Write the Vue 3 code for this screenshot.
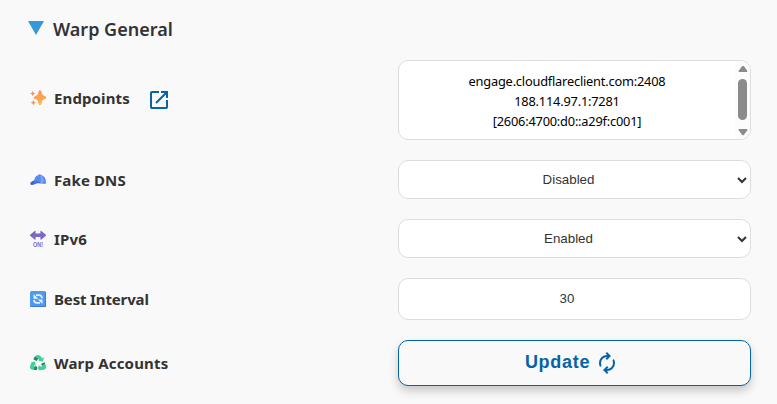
<script setup>
import { ref } from 'vue'

const endpoints = ref(['engage.cloudflareclient.com:2408', '188.114.97.1:7281', '[2606:4700:d0::a29f:c001]'])
const interval = ref(30)
</script>

<template>
  <main class="panel">
    <h2 class="heading">
      <svg class="triangle" viewBox="0 0 16 14"><path d="M0 0h16L8 14z" /></svg>
      <span class="title">Warp General</span>
    </h2>

    <div class="row tall">
      <div class="label">
        <svg class="emoji" viewBox="0 0 16 16">
          <defs>
            <linearGradient id="spark" x1="0" y1="0" x2="0" y2="1">
              <stop offset="0" stop-color="#f99560" /><stop offset="1" stop-color="#fdb846" />
            </linearGradient>
          </defs>
          <path fill="url(#spark)" d="M10 .3q.9 0 1.200.9l1 2.900q.4 1.100 1.500 1.500l1.900.8q.7.400.7 1.200t-.7 1.200l-1.900.8q-1.100.4-1.500 1.500l-1 3.100q-.3.900-1.200.900t-1.200-.9l-1-3.100q-.4-1.100-1.500-1.500l-1.900-.8q-.7-.4-.7-1.200t.7-1.200l1.900-.8q1.100-.4 1.500-1.500l1-2.900Q9.100.3 10 .3z" />
          <path fill="#f8895a" d="m2.700 1 .8 1.800 1.900.7-1.900.8-.8 1.900-.8-1.900L0 3.500l1.900-.7z" />
          <path fill="#f98f5c" d="m3.400 10 .9 1.900 1.900.8-1.900.8-.9 2-.9-2-1.900-.8 1.900-.8z" />
        </svg>
        <span class="endpoints-text">Endpoints</span>
        <svg class="open" viewBox="0 0 24 24"><path d="M5 21q-.825 0-1.412-.587T3 19V5q0-.825.588-1.412T5 3h7v2H5v14h14v-7h2v7q0 .825-.587 1.413T19 21zm4.700-5.300-1.400-1.400L17.600 5H14V3h7v7h-2V6.400z" /></svg>
      </div>
      <div class="field endpoints">
        <div class="lines"><div v-for="line in endpoints" :key="line"><span>{{ line }}</span></div></div>
        <div class="scrollbar">
          <svg viewBox="0 0 10 8"><path d="M4 1.200q1-1 2 0L9.300 5.700q.5 1.300-.8 1.300h-7Q.2 7 .7 5.700z" /></svg>
          <div class="thumb"></div>
          <svg viewBox="0 0 10 8"><path d="M4 6.800q1 1 2 0l3.300-4.500Q9.800 1 8.500 1h-7Q.2 1 .7 2.300z" /></svg>
        </div>
      </div>
    </div>

    <div class="row select-row">
      <div class="label">
        <svg class="emoji" viewBox="0 0 16 16">
          <path fill="#4164c6" d="M5 8.300Q1 9.300.3 11.300q-.3 1.700 1.700 1.600 2.300-.2 4.200-1.500z" />
          <path fill="#5c8cf2" d="M4.200 11Q3.600 3 9.800 3 16 3 16 10.500q0 1.700-1.500 1.500l-3-.6q-2.800-.5-7.300.1z" />
          <path fill="#7ca6f8" d="M9.300 3Q14 3.500 13.300 11.500l-2.800-.4Q12.200 5 9.300 3z" />
          <path fill="#4a73dc" d="M8.500 2.400h2.300v1H8.500zM4.400 9q3-1.300 7 2.200-3.700-.4-7 .2z" />
        </svg>
        <span class="dns-text">Fake DNS</span>
      </div>
      <div class="field select"><span>Disabled</span><svg class="chevron" viewBox="0 0 10 8"><path d="m1 2 4 4 4-4" /></svg></div>
    </div>

    <div class="row select-row">
      <div class="label">
        <svg class="emoji" viewBox="0 0 16 16">
          <path fill="#8067c5" d="M.1 3.800 4.600 0q1-.7 1 .5v2.100h4.800V.5q0-1.200 1-.5l4.500 3.800q.4.500 0 1l-4.500 3.800q-1 .7-1-.5V6H5.600v2.100q0 1.200-1 .5L.1 4.800q-.4-.5 0-1z" />
          <text class="on" x="8" y="15.800" text-anchor="middle" textLength="10" lengthAdjust="spacingAndGlyphs">ON!</text>
        </svg>
        <span class="ip-text">IPv6</span>
      </div>
      <div class="field select"><span>Enabled</span><svg class="chevron" viewBox="0 0 10 8"><path d="m1 2 4 4 4-4" /></svg></div>
    </div>

    <div class="row input-row">
      <div class="label">
        <svg class="emoji" viewBox="0 0 16 16">
          <rect width="16" height="16" rx="1.500" fill="#4d9bf0" />
          <path d="M.5 15.500h15V1" fill="none" stroke="#4677d9" />
          <g fill="none" stroke="#e6f0ff" stroke-width="1.700">
            <path d="M6 4.200h3.200q2.600 0 2.800 3M10 11.900H6.800q-2.600 0-2.800-3" />
          </g>
          <path fill="#e6f0ff" d="M3.500 3v4.700h4.800zM12.500 13.100V8.400H7.700z" />
        </svg>
        <span class="interval-text">Best Interval</span>
      </div>
      <div class="field number"><span>{{ interval }}</span></div>
    </div>

    <div class="row button-row">
      <div class="label">
        <svg class="emoji" viewBox="0 0 16 16">
          <g fill="none" stroke-width="3.600" stroke-linejoin="round">
            <path stroke="#46cf94" d="m5 4.900 1.400-2.300Q7 1.900 8 1.900t1.700 1l1.500 2.600" />
            <path stroke="#46cf94" d="m12.800 8.300 1.400 2.500q1 2.200-1.600 2.400H10" />
            <path stroke="#46cf94" d="M6.800 13.200H3.500Q.9 13 2 10.700l1.500-2.600" />
            <path stroke="#277e70" d="m5 5.100 1.500-2.500M12.700 8.100l.9 1.600M6.900 13.200H4.200" />
          </g>
          <path fill="#46cf94" d="m8.400 5.700 4.400.9L14.100 2zM10.200 10.100v6l-3.100-3zM.6 7.600l4.300-1L6 10.900z" />
        </svg>
        <span class="accounts-text">Warp Accounts</span>
      </div>
      <button class="update" type="button">
        <span>Update</span>
        <svg viewBox="0 0 24 24"><path d="M5.100 16.050q-.55-.95-.825-1.950T4 12.050q0-3.350 2.325-5.700T12 4h.175l-1.600-1.600 1.400-1.400 4 4-4 4-1.400-1.400 1.600-1.600H12Q9.500 6 7.750 7.762T6 12.050q0 .65.150 1.275t.450 1.225zM12.025 23l-4-4 4-4 1.400 1.400-1.600 1.600H12q2.500 0 4.250-1.762T18 11.950q0-.65-.150-1.275T17.400 9.450l1.500-1.500q.550.950.825 1.950T20 11.950q0 3.350-2.325 5.700T12 20h-.175l1.600 1.600z" /></svg>
      </button>
    </div>
  </main>
</template>

<style>
body { background: #f9f9f9; }
</style>

<style scoped>
.panel {
  box-sizing: border-box;
  height: 404px;
  padding: 14px 26px 18px 28px;
  display: flex;
  flex-direction: column;
  gap: 20px;
  overflow: hidden;
  background: #f9f9f9;
  color: #333;
  font-family: "Noto Sans", sans-serif;
}
.heading {
  height: 30px;
  margin: 0 0 -4px;
  display: flex;
  align-items: center;
  gap: 9px;
  font-size: 18px;
  line-height: 30px;
  font-weight: 600;
}
.triangle { width: 16px; height: 14px; margin-top: -2px; fill: #3498db; }
.row { display: grid; grid-template-columns: 370px 353px; flex: none; }
.tall { height: 80px; }
.select-row { height: 39px; }
.input-row { height: 42px; }
.button-row { height: 46px; }
.label {
  display: flex;
  align-items: center;
  padding-left: 2px;
  font-size: 15px;
  font-weight: 700;
  white-space: nowrap;
}
.label span { line-height: 22px; }
.endpoints-text, .dns-text { letter-spacing: .12px; }
.ip-text { letter-spacing: .2px; }
.interval-text { letter-spacing: -.15px; }
.accounts-text { letter-spacing: .18px; }
.emoji { width: 16px; height: 16px; margin-right: 8px; flex: none; overflow: visible; }
.on { font: 700 7px "Liberation Sans", sans-serif; fill: #8067c5; }
.open { width: 24px; height: 24px; margin: 3px 0 0 17px; fill: #0563a6; }
.tall .label { padding-bottom: 4px; }
.field {
  box-sizing: border-box;
  border: 1px solid #ddd;
  border-radius: 10px;
  background: #fff;
  display: flex;
  align-items: center;
}
.endpoints { justify-content: flex-end; overflow: hidden; }
.lines {
  flex: 1;
  padding: 2px 0 0;
  text-align: center;
  color: #000;
  font-size: 12.8px;
  line-height: 20px;
  letter-spacing: -.2px;
}
.scrollbar {
  width: 15px;
  height: 78px;
  box-sizing: border-box;
  padding: 4px 0 3px;
  display: flex;
  flex-direction: column;
  align-items: center;
  justify-content: space-between;
  background: #fcfcfc;
}
.scrollbar svg { width: 10px; height: 8px; fill: #8b8b8b; }
.thumb { width: 9px; height: 41px; margin-top: -2px; border-radius: 5px; background: #8b8b8b; }
.select, .number {
  font-family: "Liberation Sans", sans-serif;
  font-size: 13.333px;
}
.select span { flex: 1; text-align: center; padding-right: 9px; }
.chevron { width: 10px; height: 8px; margin-right: 3px; margin-left: -10px; fill: none; stroke: #333; stroke-width: 2; }
.number { justify-content: center; padding-right: 15px; padding-bottom: 2px; }
.update {
  width: 353px;
  height: 46px;
  padding: 0 5px 0 0;
  border: 1px solid #0563a6;
  border-radius: 10px;
  background: #f9f9f9;
  color: #0563a6;
  display: flex;
  align-items: center;
  justify-content: center;
  gap: 5px;
  font: 700 18px/24px "Liberation Sans", sans-serif;
  letter-spacing: .7px;
  box-shadow: 0 5px 10px rgba(0, 0, 0, .2);
}
.update span { margin-top: -2px; }
.update svg { width: 24px; height: 24px; fill: #0563a6; }
</style>
